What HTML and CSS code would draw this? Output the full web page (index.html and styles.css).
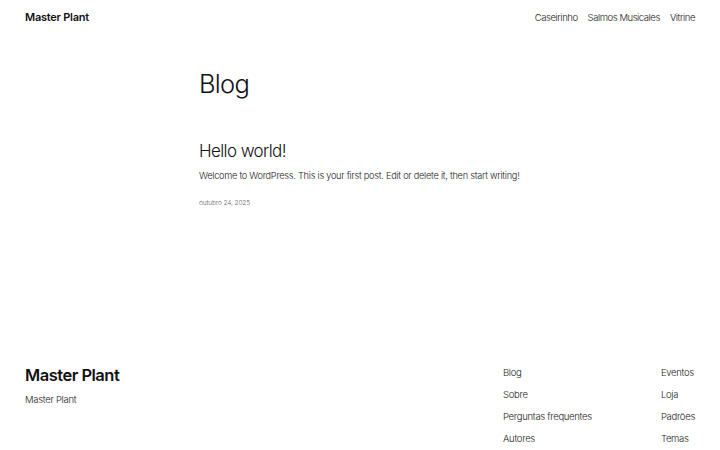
FILE: index.html
```html
<!DOCTYPE html>
<html lang="pt-BR">
<head>
<meta charset="utf-8">
<title>Blog – Master Plant</title>
<link rel="stylesheet" href="styles.css">
</head>
<body>
<header class="site-header">
  <a class="site-title" href="#">Master Plant</a>
  <nav class="top-nav">
    <a href="#">Caseirinho</a>
    <a href="#">Salmos Musicales</a>
    <a href="#">Vitrine</a>
  </nav>
</header>
<main class="content">
  <h1 class="page-title">Blog</h1>
  <article class="post">
    <h2 class="post-title">Hello world!</h2>
    <p class="post-excerpt">Welcome to WordPress. This is your first post. Edit or delete it, then start writing!</p>
    <p class="post-date">outubro 24, 2025</p>
  </article>
</main>
<footer class="site-footer">
  <div class="footer-brand">
    <div class="footer-title">Master Plant</div>
    <div class="footer-tagline">Master Plant</div>
  </div>
  <div class="footer-navs">
    <nav class="footer-col">
      <a href="#">Blog</a>
      <a href="#">Sobre</a>
      <a href="#">Perguntas frequentes</a>
      <a href="#">Autores</a>
    </nav>
    <nav class="footer-col">
      <a href="#">Eventos</a>
      <a href="#">Loja</a>
      <a href="#">Padrões</a>
      <a href="#">Temas</a>
    </nav>
  </div>
</footer>
</body>
</html>
```
FILE: styles.css
```css
* { box-sizing: border-box; }
html, body { margin: 0; padding: 0; background: #fff; }
body {
  font-family: Inter, "Noto Sans", sans-serif;
  color: #111111;
  width: 720px;
  height: 450px;
  overflow: hidden;
}
a { color: inherit; text-decoration: none; }

.site-header {
  display: flex;
  justify-content: space-between;
  align-items: center;
  height: 34px;
  padding: 0 25px;
}
.site-title {
  font-size: 11px;
  font-weight: 600;
  letter-spacing: -0.25px;
}
.top-nav {
  display: flex;
  gap: 10px;
  font-size: 9.5px;
  font-weight: 300;
  letter-spacing: -0.45px;
  color: #1a1a1a;
}

.content {
  width: 322px;
  margin: 34px auto 0;
  height: 297px;
}
.page-title {
  margin: 0;
  font-size: 25.5px;
  font-weight: 300;
  line-height: 32px;
  letter-spacing: -0.7px;
}
.post { margin-top: 40px; }
.post-title {
  margin: 0;
  font-size: 17px;
  font-weight: 300;
  line-height: 22px;
  letter-spacing: -0.6px;
}
.post-excerpt {
  margin: 7px 0 0;
  font-size: 9.2px;
  font-weight: 300;
  line-height: 14px;
  letter-spacing: -0.25px;
  white-space: nowrap;
  color: #1a1a1a;
}
.post-date {
  margin: 15px 0 0;
  font-size: 6.5px;
  font-weight: 300;
  line-height: 10px;
  letter-spacing: -0.1px;
  color: #666;
}

.site-footer {
  display: flex;
  justify-content: space-between;
  align-items: flex-start;
  padding: 0 25px;
}
.footer-title {
  font-size: 16.5px;
  font-weight: 600;
  line-height: 20px;
  letter-spacing: -0.5px;
  margin-top: 0;
}
.footer-tagline {
  margin-top: 8px;
  font-size: 9.5px;
  font-weight: 300;
  line-height: 14px;
  letter-spacing: -0.3px;
  color: #1a1a1a;
}
.footer-navs {
  display: flex;
  gap: 69px;
  margin-top: 1px;
}
.footer-col {
  display: flex;
  flex-direction: column;
  gap: 8px;
  font-size: 9.5px;
  font-weight: 300;
  line-height: 14px;
  letter-spacing: -0.3px;
  color: #1a1a1a;
}
```
